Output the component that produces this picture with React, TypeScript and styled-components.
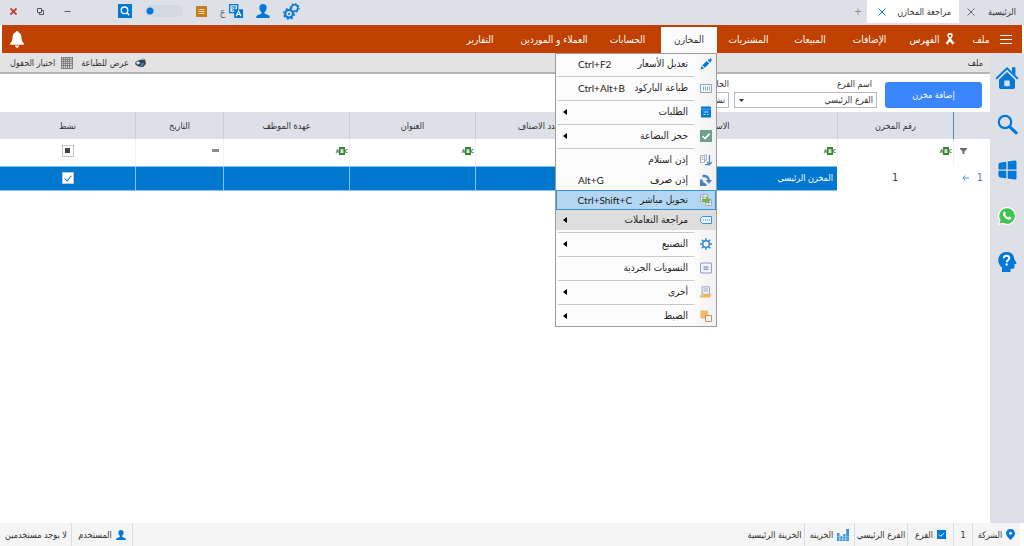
import React from 'react';
import styled, { createGlobalStyle, css } from 'styled-components';

const BLUE = '#0078d7';
const ORANGE = '#c04000';
const CHROME = '#dde0e6';
const INK = '#333333';

const GlobalStyle = createGlobalStyle`
  *, *::before, *::after { box-sizing: border-box; }
  html, body, #root { height: 100%; }
  body { margin: 0; background: #ffffff; }
  body, button, select, input { font-family: "DejaVu Sans Condensed", "DejaVu Sans", sans-serif; }
  button { margin: 0; padding: 0; border: 0; background: none; color: inherit; font-size: 10px; }
  svg { display: block; flex: none; }
`;

const Window = styled.div`
  min-height: 100%;
  display: flex;
  flex-direction: column;
  color: ${INK};
  font-size: 10px;
  background: #ffffff;
`;

/* Title bar */

const TitleBar = styled.header`
  height: 25px;
  display: flex;
  justify-content: space-between;
  background: ${CHROME};
`;

const Tabs = styled.div`
  display: flex;
  align-items: stretch;
  height: 23px;
`;

const Tab = styled.div<{ $active?: boolean }>`
  display: flex;
  align-items: center;
  justify-content: space-between;
  width: ${(p) => (p.$active ? 92 : 65)}px;
  padding: 0 8px 0 ${(p) => (p.$active ? 11 : 8)}px;
  white-space: nowrap;
  font-size: 9px;
  background: ${(p) => (p.$active ? '#ffffff' : 'transparent')};
  color: ${INK};
`;

const PlainButton = styled.button<{ $color?: string }>`
  display: flex;
  align-items: center;
  justify-content: center;
  color: ${(p) => p.$color ?? INK};
`;

const AddTab = styled(PlainButton)`
  width: 18px;
`;

const TitleTools = styled.div`
  display: flex;
  align-items: center;
  gap: 13px;
  height: 22px;
  padding-left: 10px;
`;

const LanguageGroup = styled.div`
  display: flex;
  align-items: center;
  gap: 4px;
  color: #66686c;
`;

const CaptionButtons = styled.div`
  display: flex;
  align-items: center;
  gap: 20px;
  padding-right: 34px;
`;

const Toggle = styled.input`
  appearance: none;
  width: 38px;
  height: 12px;
  margin: 0;
  border-radius: 6px;
  background: radial-gradient(circle at 5px 6px, ${BLUE} 3px, transparent 4px), #d3d8e2;
`;

/* Main navigation */

const NavBar = styled.nav`
  height: 28px;
  margin: 0 2px;
  display: flex;
  align-items: stretch;
  justify-content: space-between;
  background: ${ORANGE};
  color: #ffffff;
`;

const NavItems = styled.div`
  display: flex;
  padding-right: 6px;
`;

const NavSlot = styled.div<{ $width: number }>`
  position: relative;
  display: flex;
  width: ${(p) => p.$width}px;
`;

const NavButton = styled.button<{ $open?: boolean }>`
  flex: 1;
  display: flex;
  align-items: center;
  justify-content: center;
  gap: 6px;
  white-space: nowrap;
  color: #ffffff;
  ${(p) =>
    p.$open &&
    css`
      margin-top: 2px;
      padding-bottom: 2px;
      background: #fbfbfc;
      color: ${INK};
    `}
`;

const BellButton = styled(PlainButton)`
  width: 30px;
`;

/* Drop-down menu */

const Menu = styled.div`
  position: absolute;
  top: 28px;
  right: 0;
  z-index: 2;
  width: 162px;
  border: 1px solid #9c9c9c;
  background: linear-gradient(to left, #f1f1f3 0, #fcfcfc 24px);
  color: #222222;
`;

const MenuItem = styled.button<{ $state?: 'selected' | 'shaded' }>`
  width: 100%;
  height: 20px;
  display: grid;
  grid-template-columns: 20px 1fr auto;
  align-items: center;
  column-gap: 8px;
  padding-bottom: 1px;
  white-space: nowrap;
  background: ${(p) => (p.$state === 'selected' ? '#b3d7f3' : p.$state === 'shaded' ? '#dedede' : 'transparent')};
  box-shadow: ${(p) => (p.$state === 'selected' ? 'inset 0 0 0 1px #2f93e0' : 'none')};
`;

const MenuGlyph = styled.span`
  display: flex;
  justify-content: center;
`;

const MenuText = styled.span`
  text-align: right;
`;

const Shortcut = styled.kbd`
  padding-left: 22px;
  direction: ltr;
  font-family: Lato, sans-serif;
  font-size: 10px;
`;

const SubmenuMark = styled.span`
  padding-left: 7px;
`;

const MenuRule = styled.hr`
  height: 1px;
  margin: 2px 22px 1px 2px;
  border: 0;
  background: #c9c9c9;
`;

/* Body */

const Body = styled.div`
  flex: 1;
  display: flex;
`;

const Content = styled.main`
  flex: 1;
  min-width: 0;
`;

const SideBar = styled.aside`
  width: 34px;
  display: flex;
  flex-direction: column;
  align-items: center;
  gap: 22px;
  padding-top: 13px;
  background: ${CHROME};
`;

const SideButton = styled(PlainButton)`
  width: 24px;
  height: 24px;
`;

const SubBar = styled.div`
  height: 21px;
  display: flex;
  align-items: center;
  justify-content: space-between;
  padding: 0 7px 0 10px;
  background: #e3e3e3;
  border-bottom: 2px solid #b4b4b4;
`;

const SubActions = styled.div`
  display: flex;
  gap: 8px;
`;

const SubAction = styled.button`
  display: flex;
  align-items: center;
  gap: 6px;
  color: ${INK};
  font-size: 9px;
`;

const FilterBar = styled.form`
  height: 38px;
  display: flex;
  align-items: flex-end;
  gap: 5px;
  padding: 0 8px 4px;
  background: #ffffff;
`;

const PrimaryButton = styled.button`
  width: 97px;
  height: 26px;
  margin-left: 3px;
  border-radius: 3px;
  background: #3a86ff;
  color: #ffffff;
  font-size: 9px;
`;

const Field = styled.label`
  display: flex;
  flex-direction: column;
  gap: 1px;
  width: 143px;
  font-size: 9px;
  line-height: 14px;
`;

const FieldName = styled.span<{ $inset: number }>`
  padding-right: ${(p) => p.$inset}px;
`;

const SelectBox = styled.span`
  display: flex;
  align-items: center;
  height: 16px;
  padding-left: 4px;
  border: 1px solid #b5b9c0;
  background: #ffffff;
`;

const Select = styled.select`
  flex: 1;
  min-width: 0;
  height: 14px;
  appearance: none;
  border: 0;
  padding: 0 3px;
  background: transparent;
  color: ${INK};
  font-size: 9px;
`;

/* Grid */

const Grid = styled.table`
  width: 100%;
  table-layout: fixed;
  border-collapse: separate;
  border-spacing: 0;
`;

const HeadCell = styled.th<{ $accent?: boolean }>`
  height: 27px;
  padding: 0;
  background: ${CHROME};
  border-left: 1px solid ${(p) => (p.$accent ? '#3f86cc' : '#cbced4')};
  font-size: 9px;
  font-weight: 400;
  text-align: center;
  &:last-child { border-left: 0; }
`;

const FilterCell = styled.td`
  height: 27px;
  padding: 0 1px 4px;
  border-left: 1px solid #f1f1f3;
  &:last-child { border-left: 0; }
`;

const DataCell = styled.td<{ $selected?: boolean }>`
  height: 25px;
  padding: 0 4px 2px;
  text-align: center;
  ${(p) =>
    p.$selected &&
    css`
      background: #0078cf;
      color: #ffffff;
      border-left: 1px solid #86c2ee;
      border-top: 1px solid #86c2ee;
      border-bottom: 1px solid #86c2ee;
      font-size: 9px;
      text-align: right;
    `}
  &:last-child { border-left: 0; }
`;

const Centered = styled.span`
  display: flex;
  align-items: center;
  justify-content: center;
`;

const RowMark = styled.span`
  display: flex;
  align-items: center;
  justify-content: flex-end;
  gap: 8px;
  padding-left: 5px;
  color: #4c78a4;
`;

const MatchMark = styled.span`
  display: flex;
  align-items: center;
  justify-content: flex-end;
  width: 12px;
  direction: ltr;
  font-size: 5px;
  line-height: 8px;
  font-weight: 700;
  color: #5c5c5c;
`;

const MatchKey = styled.b`
  padding: 0 1px;
  background: #2e8b2e;
  color: #ffffff;
`;

const EqualsMark = styled.span`
  display: block;
  width: 7px;
  height: 3px;
  margin-right: 3px;
  background: #8c8c8c;
`;

const CheckBox = styled.input<{ $mixed?: boolean }>`
  appearance: none;
  display: grid;
  place-content: center;
  width: 12px;
  height: 12px;
  margin: 0;
  border: 1px solid #c4c4d0;
  background: #ffffff;
  &::before {
    content: '';
    ${(p) =>
      p.$mixed
        ? css`
            width: 5px;
            height: 5px;
            background: #444444;
          `
        : css`
            width: 4px;
            height: 7px;
            border: solid ${BLUE};
            border-width: 0 1px 1px 0;
            transform: rotate(40deg);
          `}
  }
`;

/* Status bar */

const StatusBar = styled.footer`
  height: 23px;
  display: flex;
  justify-content: space-between;
  margin-right: 4px;
  background: #f5f5f5;
  font-size: 9px;
`;

const StatusGroup = styled.div`
  display: flex;
`;

const StatusItem = styled.span<{ $width: number }>`
  display: flex;
  align-items: center;
  justify-content: center;
  gap: 4px;
  width: ${(p) => p.$width}px;
  white-space: nowrap;
  border-left: 1px solid #dcdcdc;
  &:last-child { border-left-color: transparent; }
`;

/* Icons */

const CloseIcon = ({ size = 8, weight = 1 }: { size?: number; weight?: number }) => (
  <svg width={size} height={size} viewBox="0 0 8 8" stroke="currentColor" strokeWidth={weight}>
    <path d="M.5.5l7 7M7.5.5l-7 7" />
  </svg>
);

const GearsIcon = () => (
  <svg width="17" height="17" viewBox="0 0 18 18" fill="none" stroke={BLUE}>
    <circle cx="12.3" cy="5.3" r="3.4" strokeWidth="1.6" />
    <circle cx="12.3" cy="5.3" r="4.6" strokeWidth="1.4" strokeDasharray="1.7 1.9" />
    <circle cx="6.4" cy="11.4" r="6.3" fill={CHROME} stroke="none" />
    <circle cx="6.4" cy="11.4" r="4" strokeWidth="2.2" />
    <circle cx="6.4" cy="11.4" r="5.6" strokeWidth="1.6" strokeDasharray="2.2 2.2" />
    <circle cx="6.4" cy="11.4" r="1.2" fill={BLUE} stroke="none" />
  </svg>
);

const PersonIcon = ({ size = 14 }: { size?: number }) => (
  <svg width={size} height={size} viewBox="0 0 15 15" fill={BLUE}>
    <path d="M7.5 0C5 0 3.600 1.600 3.600 3.800c0 2 .9 3.900 2.200 4.800v1.700c-.7.8-2.600 1.100-4.200 1.800C.5 12.600.2 13.500.2 15h14.600c0-1.500-.3-2.400-1.400-2.900-1.600-.7-3.500-1-4.200-1.800V8.600c1.300-.9 2.200-2.800 2.200-4.800C11.400 1.600 10 0 7.500 0z" />
  </svg>
);

const TranslateIcon = () => (
  <svg width="14" height="14" viewBox="0 0 14 14" fill="none">
    <path d="M.7.7h8v8h-8z" stroke={BLUE} strokeWidth="1.3" />
    <path d="M2.500 3h4.500M4.700 2v1M6.300 3c-.4 1.600-1.600 2.900-3.300 3.700M3.300 4.300c.6 1 1.300 1.700 2.500 2.200" stroke={BLUE} strokeWidth=".8" />
    <path d="M5.200 5.200H14V14H5.200z" fill={BLUE} />
    <path d="M7.300 12.200l2.300-5.400 2.300 5.400M8.200 10.500h2.800" stroke="#fff" strokeWidth="1.2" />
  </svg>
);

const ListBadgeIcon = () => (
  <svg width="11" height="11" viewBox="0 0 11 11">
    <path d="M0 0h11v11H0z" fill="#c67c1a" />
    <path d="M2.500 3.500h6M2.500 5.500h6M2.500 7.500h6" stroke="#f2dcae" />
  </svg>
);

const SearchBadgeIcon = () => (
  <svg width="14" height="14" viewBox="0 0 14 14" fill="none">
    <path d="M0 0h14v14H0z" fill={BLUE} />
    <circle cx="6.5" cy="6.3" r="3.3" stroke="#fff" strokeWidth="1.3" />
    <path d="M9 8.800l2.200 2.400" stroke="#fff" strokeWidth="1.4" />
  </svg>
);

const RestoreIcon = () => (
  <svg width="7" height="7" viewBox="0 0 7 7" fill="none" stroke="#555">
    <path d="M.5.5h4v4h-4zM2.500 4.500v2h4v-4h-2" />
  </svg>
);

const MinimizeIcon = () => (
  <svg width="7" height="7" viewBox="0 0 7 7" stroke="#555">
    <path d="M.5 3.500h6" />
  </svg>
);

const HamburgerIcon = () => (
  <svg width="12" height="10" viewBox="0 0 12 10" stroke="#fff">
    <path d="M0 1.500h12M0 5.500h12M0 9.500h12" />
  </svg>
);

const RibbonIcon = () => (
  <svg width="10" height="12" viewBox="0 0 10 12">
    <path d="M5 0C3 0 2 1.200 2.300 2.800c.2 1 .9 2 1.700 3L.6 10l1.900 1.700L5 8.200l2.500 3.500L9.400 10 6 5.800c.8-1 1.500-2 1.700-3C8 1.200 7 0 5 0zm0 1.800c.9 0 1.400.3 1.300.7-.1.500-.6 1.300-1.300 2.100-.7-.8-1.200-1.600-1.300-2.100C3.600 2.100 4.100 1.800 5 1.800z" fill="#fff" fillRule="evenodd" />
  </svg>
);

const BellIcon = () => (
  <svg width="14" height="17" viewBox="0 0 14 17" fill="#fff">
    <path d="M7 0c-.9 0-1.400.6-1.400 1.300C3.600 2 2.700 3.700 2.600 6 2.500 9 2 10.500.3 12.300c-.5.6-.2 1.400.6 1.400h12.200c.8 0 1.100-.8.6-1.400C12 10.500 11.500 9 11.400 6c-.1-2.300-1-4-3-4.700C8.400.6 7.900 0 7 0zM5 14.600h4c0 1.300-.8 2.200-2 2.200s-2-.9-2-2.200z" />
  </svg>
);

const PrinterIcon = () => (
  <svg width="11" height="11" viewBox="0 0 11 11">
    <path d="M4.500 2.200L8.500.8l1 2.700-4 1z" fill="#9fcbe8" />
    <path d="M.3 5.300L3.500 3.200l6.700-.6.6 4.300L8.200 10 3.300 9.600.4 7.600z" fill="#38424f" />
    <path d="M1 5.600l2.800-1.400 1.400 2L2.600 7.800z" fill="#dce4ea" />
    <path d="M5.800 6.600l3.200-1-.8 3.300-2.600.2z" fill="#3e86c5" />
  </svg>
);

const FieldsIcon = () => (
  <svg width="12" height="12" viewBox="0 0 12 12" stroke="#747474">
    <path d="M0 0h12v12H0z" fill="#d0d0d0" stroke="none" />
    <path d="M.5 0v12M2.500 0v12M4.500 0v12M6.500 0v12M8.500 0v12M11.500 0v12M0 .5h12M0 2.500h12M0 4.500h12M0 6.500h12M0 8.500h12M0 11.500h12" strokeWidth=".8" />
  </svg>
);

const HomeIcon = () => (
  <svg width="24" height="24" viewBox="0 0 24 24" fill={BLUE}>
    <path d="M17 1.200h3.400v8L17 6z" />
    <path d="M1.200 12.800L12 2.300l10.800 10.500" fill="none" stroke={BLUE} strokeWidth="1.9" />
    <path fillRule="evenodd" d="M12 6l8 7.800V21a2 2 0 0 1-2 2H6a2 2 0 0 1-2-2v-7.200zM9.300 14.500v5.800h5.400v-5.800z" />
  </svg>
);

const LensIcon = () => (
  <svg width="21" height="21" viewBox="0 0 21 21" fill="none" stroke={BLUE}>
    <circle cx="8" cy="8" r="6.2" strokeWidth="2.2" />
    <path d="M12.800 12.800l6.400 6" strokeWidth="3" strokeLinecap="round" />
  </svg>
);

const WindowsIcon = () => (
  <svg width="19" height="20" viewBox="0 0 19 20" fill={BLUE}>
    <path d="M2 2.700L8.300 1.800v7.700H.5V4.500c0-1 .5-1.600 1.500-1.800zM9.700 1.600L16.500.5c1.300-.2 2 .5 2 1.700v7.300H9.700zM.5 10.700h7.800v7.600l-6.300-.9c-1-.2-1.500-.8-1.500-1.800zM9.700 10.700h8.800v7.200c0 1.200-.7 1.800-2 1.600l-6.800-1z" />
  </svg>
);

const WhatsAppMark = () => (
  <svg width="18" height="18" viewBox="0 0 18 18">
    <path d="M9 0a9 9 0 1 1-4.200 17L0 18l1.100-4.600A9 9 0 0 1 9 0z" fill="#fff" />
    <path d="M9 1.200a7.800 7.800 0 1 1-3.800 14.600l-3.600.8.900-3.500A7.800 7.800 0 0 1 9 1.200z" fill="#3fc351" />
    <path d="M6 4.800c.5-.5 1-.5 1.200.1l.6 1.500c.2.600-.8 1-.6 1.400.6 1.200 1.500 2 2.800 2.500.5.200.9-1 1.400-.8l1.600.8c.6.300.4 1.300-.2 1.800-1 .9-2.500.7-4.200-.2-1.800-1-3.200-2.700-3.600-4.300-.2-1.100.2-2.100 1-2.800z" fill="#fff" />
  </svg>
);

const HelpHeadIcon = () => (
  <svg width="19" height="20" viewBox="0 0 19 20">
    <path d="M8.500 0C13.500 0 16 3 16.200 7l2.200 3.800c.3.600 0 1-.6 1.100l-1.300.2v2.900c0 1.200-.8 1.800-2 1.800H12.500V20H4v-4.500C1.500 13.700.3 11.200.3 8.300.3 3.500 3.500 0 8.500 0z" fill={BLUE} />
    <path d="M5.800 6.300c0-3.400 5.400-3.300 5.400-.1 0 2-2.500 2-2.500 4" fill="none" stroke="#fff" strokeWidth="1.9" />
    <circle cx="8.6" cy="12.5" r="1.2" fill="#fff" />
  </svg>
);

const CaretIcon = () => (
  <svg width="5" height="3" viewBox="0 0 5 3" fill="#333">
    <path d="M0 0h5L2.500 3z" />
  </svg>
);

const SubmenuIcon = () => (
  <svg width="4" height="6" viewBox="0 0 4 6" fill="#000">
    <path d="M4 0v6L0 3z" />
  </svg>
);

const FunnelIcon = () => (
  <svg width="7" height="6" viewBox="0 0 7 6" fill="#6a6a6a">
    <path d="M0 0h7v1L4.400 3.400V6H2.600V3.400L0 1z" />
  </svg>
);

const RowArrowIcon = () => (
  <svg width="7" height="6" viewBox="0 0 7 6" fill="none" stroke="#3c96dc">
    <path d="M7 3H1M3.300.6L.8 3l2.500 2.400" />
  </svg>
);

const PinIcon = () => (
  <svg width="9" height="11" viewBox="0 0 9 11">
    <path d="M4.500 0A4.400 4.400 0 0 1 9 4.400C9 7 6.500 8.500 4.500 11 2.500 8.500 0 7 0 4.400A4.400 4.400 0 0 1 4.500 0z" fill={BLUE} />
    <circle cx="4.5" cy="4.3" r="1.5" fill="#fff" />
  </svg>
);

const BranchIcon = () => (
  <svg width="9" height="9" viewBox="0 0 9 9">
    <path d="M0 0h9v9H0z" fill={BLUE} />
    <path d="M2 4.500l1.800 1.800L7.200 3" fill="none" stroke="#fff" />
  </svg>
);

const BarsIcon = () => (
  <svg width="12" height="12" viewBox="0 0 12 12" fill="#3a94dc">
    <path d="M0 4h2.500v8H0zM3.200 7h2.300v5H3.200zM6.200 5h2.300v7H6.200zM9.200 0H12v12H9.200z" />
    <path d="M0 7.500h12M0 10h12" stroke="#a9d2f2" strokeWidth=".5" />
  </svg>
);

const menuDrawings: Record<string, React.ReactNode> = {
  pencil: (
    <g fill={BLUE}>
      <path d="M.5 11.500l1-3.600 2.600 2.600zM2.300 7.200l4.400-4.300 2.500 2.500L4.800 9.700zM7.700 2.300l1-1 2.400 2.400-1 1z" />
      <circle cx="10.5" cy="1.7" r="1.2" />
    </g>
  ),
  barcode: (
    <g fill="none" stroke="#7fa6d2">
      <path d="M.5 2.500h11v8H.5z" fill="#f5f8fc" />
      <path d="M3.500 4.500v4M5.500 4.500v4M7.500 4.500v4M9.500 4.500v4" stroke="#8a8a92" strokeWidth=".8" />
    </g>
  ),
  orders: (
    <g>
      <path d="M1 .5h10v11H1z" fill={BLUE} />
      <path d="M1 3.200h10" stroke="#8cc5f2" strokeWidth=".7" />
      <path d="M3.500 6h5M3.500 8.500h2M7 8.500h1.500" stroke="#cfe6f8" strokeWidth="1.2" />
    </g>
  ),
  reserve: (
    <g>
      <path d="M0 0h12v12H0z" fill="#6f9f8e" />
      <path d="M2.500 6l2.600 2.600 4.500-5" fill="none" stroke="#fff" strokeWidth="1.6" />
    </g>
  ),
  receive: (
    <g fill="none" stroke="#9aa0a9">
      <path d="M.5 1.500h4v7h-4zM4.500.8h2v5.500h-2" strokeWidth=".8" />
      <path d="M1.500 3.500h2M1.500 5.500h2" strokeWidth=".8" />
      <path d="M9.500 1v9.500M7 8l2.500 2.700L12 8M5 10.700h4" stroke="#4a86c6" strokeWidth="1.2" />
    </g>
  ),
  issue: (
    <g fill="#4a80c0">
      <path d="M0 5.500h2.500C2.800 8 4 9.500 6.500 9.700V12H0z" />
      <path d="M2.500 1C6.500.3 9.500 2.300 9.900 6H12L8.900 10 5.700 6h2C7.300 4 5.500 3 2.500 3.500z" />
    </g>
  ),
  transfer: (
    <g fill="none" stroke="#8d9bab">
      <path d="M.5.5h7v7h-7zM.5 3h7M3 .5v7" fill="#eef3f8" strokeWidth=".7" />
      <path d="M5.500 5.500h6v6h-6zM8.500 5.500v6M5.500 8.500h6" fill="#eef3f8" strokeWidth=".7" />
      <path d="M2.500 5h4V3.200L10.500 6.300 6.500 9.300V7.500h-4z" fill="#7db83a" stroke="#5a9a28" strokeWidth=".4" />
    </g>
  ),
  review: (
    <g fill="none" stroke="#3f8fce">
      <path d="M2.500 2.500h9v7h-9L.6 7.500v-3z" fill="#eaf4fc" />
      <path d="M3 6h7" strokeDasharray="1 1" />
    </g>
  ),
  make: (
    <g fill="none" stroke="#2a86cc">
      <circle cx="6" cy="6" r="3.3" strokeWidth="1.4" />
      <path d="M6 0v2.200M6 9.800V12M0 6h2.200M9.800 6H12M1.800 1.800l1.500 1.500M8.700 8.700l1.500 1.500M1.800 10.200l1.500-1.500M8.700 3.300l1.500-1.500" strokeWidth="1.4" />
    </g>
  ),
  adjust: (
    <g fill="none" stroke="#8b9cc8">
      <path d="M.6 1h10.800v10H.6z" fill="#f4f6fc" />
      <path d="M3.500 5h5M3.500 7.200h5" stroke="#5a6ea8" />
    </g>
  ),
  other: (
    <g>
      <path d="M2 .8h7.500v7.500H2z" fill="#eef2f6" stroke="#8495a8" strokeWidth=".8" />
      <path d="M3.500 3h4.500M3.500 5h4.500" stroke="#7d9cbc" strokeWidth=".8" />
      <path d="M0 9.200h4l1-1h6.800L9.800 11.500H0z" fill="#efb658" />
    </g>
  ),
  settings: (
    <g>
      <path d="M.5.5h7.500v8H.5z" fill="#f2bb63" />
      <path d="M5.500 5.500h6v6h-6z" fill="#f8f4ea" stroke="#b29a6c" />
    </g>
  ),
};

/* Data */

type MenuEntry = {
  icon: string;
  text: string;
  keys?: string;
  submenu?: boolean;
  state?: 'selected' | 'shaded';
  rule?: boolean;
};

const menuEntries: MenuEntry[] = [
  { icon: 'pencil', text: 'تعديل الأسعار', keys: 'Ctrl+F2', rule: true },
  { icon: 'barcode', text: 'طباعة الباركود', keys: 'Ctrl+Alt+B', rule: true },
  { icon: 'orders', text: 'الطلبات', submenu: true, rule: true },
  { icon: 'reserve', text: 'حجز البضاعة', submenu: true, rule: true },
  { icon: 'receive', text: 'إذن استلام' },
  { icon: 'issue', text: 'إذن صرف', keys: 'Alt+G' },
  { icon: 'transfer', text: 'تحويل مباشر', keys: 'Ctrl+Shift+C', state: 'selected' },
  { icon: 'review', text: 'مراجعة التعاملات', submenu: true, state: 'shaded', rule: true },
  { icon: 'make', text: 'التصنيع', submenu: true, rule: true },
  { icon: 'adjust', text: 'التسويات الجردية', rule: true },
  { icon: 'other', text: 'أخرى', submenu: true, rule: true },
  { icon: 'settings', text: 'الضبط', submenu: true },
];

const navEntries: { text: string; width: number; ribbon?: boolean; open?: boolean }[] = [
  { text: 'ملف', width: 30 },
  { text: 'الفهرس', width: 67, ribbon: true },
  { text: 'الإضافات', width: 59 },
  { text: 'المبيعات', width: 60 },
  { text: 'المشتريات', width: 63 },
  { text: 'المخازن', width: 56, open: true },
  { text: 'الحسابات', width: 67 },
  { text: 'العملاء و الموردين', width: 80 },
  { text: 'التقارير', width: 68 },
];

const columns: { text: string; width?: number; filter: 'text' | 'date' | 'check' }[] = [
  { text: 'رقم المخزن', width: 116, filter: 'text' },
  { text: 'الاسم', width: 235, filter: 'text' },
  { text: 'عدد الاصناف', width: 127, filter: 'text' },
  { text: 'العنوان', width: 126, filter: 'text' },
  { text: 'عهدة الموظف', width: 126, filter: 'text' },
  { text: 'التاريخ', width: 88, filter: 'date' },
  { text: 'نشط', filter: 'check' },
];

const StoresMenu = () => (
  <Menu role="menu">
    {menuEntries.map((entry) => (
      <React.Fragment key={entry.text}>
        <MenuItem role="menuitem" type="button" $state={entry.state}>
          <MenuGlyph>
            <svg width="12" height="12" viewBox="0 0 12 12">{menuDrawings[entry.icon]}</svg>
          </MenuGlyph>
          <MenuText>{entry.text}</MenuText>
          {entry.keys && <Shortcut>{entry.keys}</Shortcut>}
          {entry.submenu && <SubmenuMark><SubmenuIcon /></SubmenuMark>}
        </MenuItem>
        {entry.rule && <MenuRule />}
      </React.Fragment>
    ))}
  </Menu>
);

const ColumnFilter = ({ kind }: { kind: 'text' | 'date' | 'check' }) => {
  if (kind === 'text') return <MatchMark>A<MatchKey>B</MatchKey>C</MatchMark>;
  if (kind === 'date') return <EqualsMark />;
  return (
    <Centered>
      <CheckBox type="checkbox" $mixed aria-label="نشط" />
    </Centered>
  );
};

export default function App() {
  return (
    <Window dir="rtl" lang="ar">
      <GlobalStyle />
      <TitleBar>
        <Tabs>
          <Tab>
            الرئيسية
            <PlainButton type="button" $color="#666"><CloseIcon /></PlainButton>
          </Tab>
          <Tab $active>
            مراجعة المخازن
            <PlainButton type="button" $color={BLUE}><CloseIcon /></PlainButton>
          </Tab>
          <AddTab type="button" $color="#888">+</AddTab>
        </Tabs>
        <TitleTools>
          <PlainButton type="button"><GearsIcon /></PlainButton>
          <PlainButton type="button"><PersonIcon /></PlainButton>
          <LanguageGroup>
            <PlainButton type="button"><TranslateIcon /></PlainButton>
            ع
          </LanguageGroup>
          <PlainButton type="button"><ListBadgeIcon /></PlainButton>
          <Toggle type="checkbox" role="switch" />
          <PlainButton type="button"><SearchBadgeIcon /></PlainButton>
          <CaptionButtons>
            <PlainButton type="button"><MinimizeIcon /></PlainButton>
            <PlainButton type="button"><RestoreIcon /></PlainButton>
            <PlainButton type="button" $color="#c0392b"><CloseIcon size={7} weight={2} /></PlainButton>
          </CaptionButtons>
        </TitleTools>
      </TitleBar>

      <NavBar>
        <NavItems>
          <NavSlot $width={20}>
            <NavButton type="button"><HamburgerIcon /></NavButton>
          </NavSlot>
          {navEntries.map((entry) => (
            <NavSlot key={entry.text} $width={entry.width}>
              <NavButton type="button" $open={entry.open}>
                {entry.ribbon && <RibbonIcon />}
                {entry.text}
              </NavButton>
              {entry.open && <StoresMenu />}
            </NavSlot>
          ))}
        </NavItems>
        <BellButton type="button"><BellIcon /></BellButton>
      </NavBar>

      <Body>
        <SideBar>
          <SideButton type="button"><HomeIcon /></SideButton>
          <SideButton type="button"><LensIcon /></SideButton>
          <SideButton type="button"><WindowsIcon /></SideButton>
          <SideButton type="button"><WhatsAppMark /></SideButton>
          <SideButton type="button"><HelpHeadIcon /></SideButton>
        </SideBar>
        <Content>
          <SubBar>
            <SubAction type="button">ملف</SubAction>
            <SubActions>
              <SubAction type="button"><PrinterIcon />عرض للطباعة</SubAction>
              <SubAction type="button"><FieldsIcon />اختيار الحقول</SubAction>
            </SubActions>
          </SubBar>
          <FilterBar>
            <PrimaryButton type="button">إضافة مخزن</PrimaryButton>
            <Field>
              <FieldName $inset={5}>اسم الفرع</FieldName>
              <SelectBox>
                <Select><option>الفرع الرئيسي</option></Select>
                <CaretIcon />
              </SelectBox>
            </Field>
            <Field>
              <FieldName $inset={0}>الحالة</FieldName>
              <SelectBox>
                <Select><option>نشط</option></Select>
                <CaretIcon />
              </SelectBox>
            </Field>
          </FilterBar>
          <Grid>
            <colgroup>
              <col width={37} />
              {columns.map((column) => (
                <col key={column.text} width={column.width} />
              ))}
            </colgroup>
            <thead>
              <tr>
                <HeadCell $accent />
                {columns.map((column) => (
                  <HeadCell key={column.text}>{column.text}</HeadCell>
                ))}
              </tr>
            </thead>
            <tbody>
              <tr>
                <FilterCell><RowMark><FunnelIcon /></RowMark></FilterCell>
                {columns.map((column) => (
                  <FilterCell key={column.text}><ColumnFilter kind={column.filter} /></FilterCell>
                ))}
              </tr>
              <tr>
                <DataCell><RowMark>1<RowArrowIcon /></RowMark></DataCell>
                <DataCell>1</DataCell>
                <DataCell $selected>المخزن الرئيسي</DataCell>
                <DataCell $selected />
                <DataCell $selected />
                <DataCell $selected />
                <DataCell $selected />
                <DataCell $selected>
                  <Centered><CheckBox type="checkbox" defaultChecked aria-label="نشط" /></Centered>
                </DataCell>
              </tr>
            </tbody>
          </Grid>
        </Content>
      </Body>

      <StatusBar>
        <StatusGroup>
          <StatusItem $width={48}><PinIcon />الشركة</StatusItem>
          <StatusItem $width={19}>1</StatusItem>
          <StatusItem $width={46}><BranchIcon />الفرع</StatusItem>
          <StatusItem $width={53}>الفرع الرئيسي</StatusItem>
          <StatusItem $width={50}><BarsIcon />الخزينه</StatusItem>
          <StatusItem $width={60}>الخزينة الرئيسية</StatusItem>
        </StatusGroup>
        <StatusGroup>
          <StatusItem $width={1} />
          <StatusItem $width={61}><PersonIcon size={10} />المستخدم</StatusItem>
          <StatusItem $width={71}>لا يوجد مستخدمين</StatusItem>
        </StatusGroup>
      </StatusBar>
    </Window>
  );
}
